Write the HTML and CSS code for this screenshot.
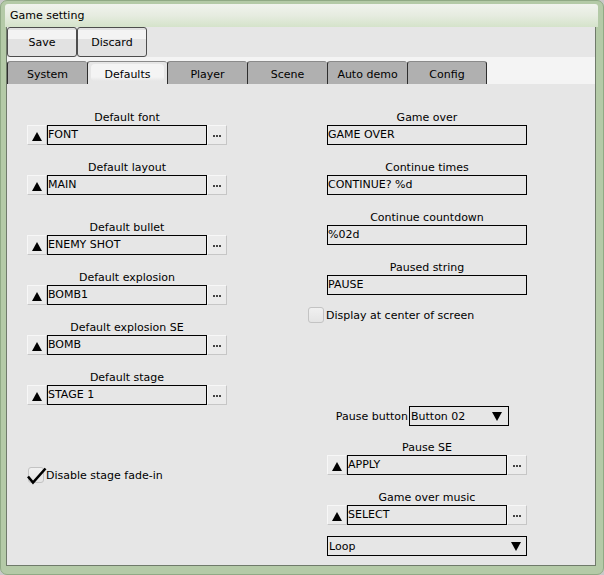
FILE: index.html
```html
<!DOCTYPE html>
<html>
<head>
<meta charset="utf-8">
<link rel="stylesheet" href="styles.css">
</head>
<body>
<div class="window">
  <div class="titlebar">Game setting</div>
  <div class="client">
    <div class="toolbar">
      <div class="btn">Save</div>
      <div class="btn">Discard</div>
    </div>
    <div class="tabstrip">
      <div class="tab">System</div>
      <div class="tab active"><span>Defaults</span></div>
      <div class="tab">Player</div>
      <div class="tab">Scene</div>
      <div class="tab">Auto demo</div>
      <div class="tab last">Config</div>
    </div>
    <div class="panel">
      <div class="col">
        <div class="group">
          <div class="label">Default font</div>
          <div class="row"><div class="arrow"><svg width="10" height="9" viewBox="0 0 10 9"><path d="M5 0L10 9H0Z"/></svg></div><div class="field">FONT</div><div class="dots"><i></i><i></i><i></i></div></div>
        </div>
        <div class="group">
          <div class="label">Default layout</div>
          <div class="row"><div class="arrow"><svg width="10" height="9" viewBox="0 0 10 9"><path d="M5 0L10 9H0Z"/></svg></div><div class="field">MAIN</div><div class="dots"><i></i><i></i><i></i></div></div>
        </div>
        <div class="group gap-top">
          <div class="label">Default bullet</div>
          <div class="row"><div class="arrow"><svg width="10" height="9" viewBox="0 0 10 9"><path d="M5 0L10 9H0Z"/></svg></div><div class="field">ENEMY SHOT</div><div class="dots"><i></i><i></i><i></i></div></div>
        </div>
        <div class="group">
          <div class="label">Default explosion</div>
          <div class="row"><div class="arrow"><svg width="10" height="9" viewBox="0 0 10 9"><path d="M5 0L10 9H0Z"/></svg></div><div class="field">BOMB1</div><div class="dots"><i></i><i></i><i></i></div></div>
        </div>
        <div class="group">
          <div class="label">Default explosion SE</div>
          <div class="row"><div class="arrow"><svg width="10" height="9" viewBox="0 0 10 9"><path d="M5 0L10 9H0Z"/></svg></div><div class="field">BOMB</div><div class="dots"><i></i><i></i><i></i></div></div>
        </div>
        <div class="group">
          <div class="label">Default stage</div>
          <div class="row"><div class="arrow"><svg width="10" height="9" viewBox="0 0 10 9"><path d="M5 0L10 9H0Z"/></svg></div><div class="field">STAGE 1</div><div class="dots"><i></i><i></i><i></i></div></div>
        </div>
        <div class="check check-fade">
          <div class="box"><svg class="tick" width="20" height="18" viewBox="0 0 20 18"><path d="M1 9.5L6 15.5L18.5 1.5" fill="none" stroke="#000" stroke-width="2.6" stroke-linejoin="miter"/></svg></div>
          <span>Disable stage fade-in</span>
        </div>
      </div>
      <div class="col">
        <div class="group">
          <div class="label">Game over</div>
          <div class="row"><div class="field wide">GAME OVER</div></div>
        </div>
        <div class="group">
          <div class="label">Continue times</div>
          <div class="row"><div class="field wide">CONTINUE? %d</div></div>
        </div>
        <div class="group">
          <div class="label">Continue countdown</div>
          <div class="row"><div class="field wide">%02d</div></div>
        </div>
        <div class="group">
          <div class="label">Paused string</div>
          <div class="row"><div class="field wide">PAUSE</div></div>
        </div>
        <div class="check check-center">
          <div class="box"></div>
          <span>Display at center of screen</span>
        </div>
        <div class="pause-row">
          <div class="pause-label">Pause button</div>
          <div class="combo small"><span>Button 02</span><svg class="down" width="10" height="9" viewBox="0 0 10 9"><path d="M0 0H10L5 9Z"/></svg></div>
        </div>
        <div class="group se">
          <div class="label">Pause SE</div>
          <div class="row"><div class="arrow"><svg width="10" height="9" viewBox="0 0 10 9"><path d="M5 0L10 9H0Z"/></svg></div><div class="field">APPLY</div><div class="dots"><i></i><i></i><i></i></div></div>
        </div>
        <div class="group music">
          <div class="label">Game over music</div>
          <div class="row"><div class="arrow"><svg width="10" height="9" viewBox="0 0 10 9"><path d="M5 0L10 9H0Z"/></svg></div><div class="field">SELECT</div><div class="dots"><i></i><i></i><i></i></div></div>
        </div>
        <div class="combo loop"><span>Loop</span><svg class="down" width="10" height="9" viewBox="0 0 10 9"><path d="M0 0H10L5 9Z"/></svg></div>
      </div>
    </div>
  </div>
</div>
</body>
</html>
```
FILE: styles.css
```css
* { box-sizing: border-box; }
html, body { margin: 0; padding: 0; }
body {
  background: #c9c9c9;
  font-family: "DejaVu Sans", "Noto Sans", sans-serif;
  font-size: 11px;
  color: #000;
}
.window {
  width: 604px;
  height: 575px;
  background: #b4caa7;
  border: 1px solid #90a985;
  border-radius: 7px;
  padding: 3px 7px 8px 5px;
  display: flex;
  flex-direction: column;
}
.titlebar {
  height: 23px;
  line-height: 22px;
  padding: 1px 0 0 5px;
  margin: 0 -2px 0 -1px;
  background: linear-gradient(to bottom, #f1f3ee 0%, #e6ece0 50%, #d5e3ca 100%);
  border-radius: 3px 3px 0 0;
}
.client {
  flex: 1;
  display: flex;
  flex-direction: column;
  border: 1px solid #6f7a6a;
  border-top: none;
  background: #e6e6e6;
}
.toolbar {
  height: 30px;
  display: flex;
  background: #e6e6e6;
}
.btn {
  width: 70px;
  height: 30px;
  border: 1px solid #4d4d4d;
  border-radius: 3px;
  background: linear-gradient(to bottom, #e2e2e2 0, #e2e2e2 2px, #f3f3f3 2px, #f3f3f3 11px, #e2e2e2 11px);
  text-align: center;
  line-height: 29px;
}
.tabstrip {
  height: 27px;
  padding-top: 4px;
  display: flex;
  background: #f4f4f4;
}
.tab {
  width: 80px;
  height: 23px;
  background: #b0b0b0;
  border-left: 1px solid #2e2e2e;
  border-top: 1px solid #8a8a8a;
  border-radius: 3px 3px 0 0;
  text-align: center;
  line-height: 22px;
  padding-top: 2px;
}
.tab.last { border-right: 1px solid #2e2e2e; }
.tab.active {
  background: #e6e6e6;
  padding: 2px 3px 0 3px;
}
.tab.active span {
  display: block;
  height: 17px;
  line-height: 22px;
  border-radius: 4px;
  background: linear-gradient(to bottom, #f4f4f4 0, #f4f4f4 13px, #e6e6e6 17px);
}
.panel {
  flex: 1;
  background: #e6e6e6;
  padding: 27px 0 0 20px;
  display: grid;
  grid-template-columns: 200px 200px;
  column-gap: 100px;
  align-items: start;
}
.col { display: flex; flex-direction: column; }
.group { display: flex; flex-direction: column; margin-bottom: 16px; }
.group.gap-top { margin-top: 10px; }
.label { height: 14px; line-height: 14px; text-align: center; white-space: nowrap; }
.row { display: flex; height: 20px; }
.arrow, .dots {
  width: 20px;
  height: 20px;
  background: #ebebeb;
  border: 1px solid;
  border-color: #f7f7f7 #c6c6c6 #c6c6c6 #f7f7f7;
  display: flex;
  align-items: center;
  justify-content: center;
}
.arrow svg { margin-top: 2px; fill: #000; }
.dots { gap: 1px; padding-top: 1px; }
.dots i { width: 2px; height: 2px; background: #444; }
.field {
  width: 160px;
  height: 20px;
  border: 1px solid #000;
  padding-left: 0;
  line-height: 18px;
  white-space: nowrap;
}
.field.wide { width: 200px; }
.check {
  display: flex;
  align-items: center;
  height: 16px;
  gap: 2px;
}
.box {
  position: relative;
  width: 16px;
  height: 16px;
  border: 1px solid #c3c3c3;
  border-radius: 3px;
  background: linear-gradient(to bottom, #f0f0f0, #e4e4e4);
  flex: none;
}
.tick { position: absolute; left: -2px; top: -1px; }
.check-fade { margin-top: 46px; margin-left: 1px; }
.check-center { margin-top: -4px; margin-left: -19px; gap: 2px; }
.pause-row {
  display: flex;
  margin-top: 83px;
  height: 20px;
  align-items: center;
}
.pause-label { width: 81px; text-align: right; white-space: nowrap; }
.combo {
  height: 20px;
  border: 1px solid #000;
  display: flex;
  align-items: center;
  padding-left: 1px;
  white-space: nowrap;
}
.combo .down { margin-left: auto; fill: #000; }
.combo.small { width: 100px; margin-left: 1px; }
.combo.small .down { margin-right: 6px; }
.group.se { margin-top: 15px; }
.group.music { margin-bottom: 0; }
.combo.loop { width: 200px; margin-top: 11px; }
.combo.loop .down { margin-right: 5px; }
```
